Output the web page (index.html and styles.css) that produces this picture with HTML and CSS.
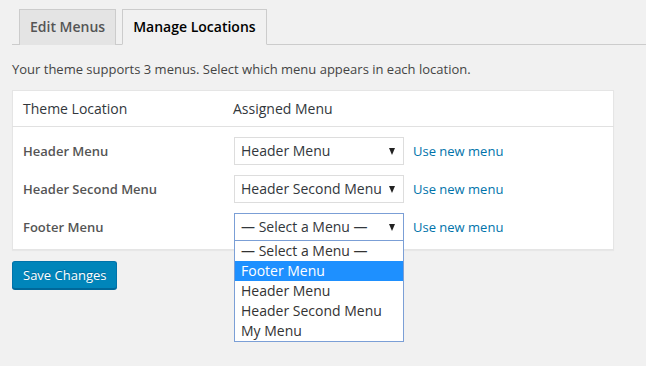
FILE: index.html
```html
<!DOCTYPE html>
<html>
<head>
	<title>Menus</title>
	<link rel="stylesheet" href="styles.css">
</head>
<body>
	<div class="wrap">
		<h2 class="nav-tab-wrapper">
			<a href="#" class="nav-tab">Edit Menus</a>
			<a href="#" class="nav-tab nav-tab-active">Manage Locations</a>
		</h2>

		<p class="manage-desc">Your theme supports 3 menus. Select which menu appears in each location.</p>

		<table class="menu-locations">
			<thead>
				<tr>
					<th class="col-location">Theme Location</th>
					<th>Assigned Menu</th>
				</tr>
			</thead>
			<tbody>
				<tr>
					<td class="menu-location-title">Header Menu</td>
					<td>
						<div class="location-row">
							<div class="menu-select">Header Menu<span class="arrow"></span></div>
							<a href="#" class="new-menu">Use new menu</a>
						</div>
					</td>
				</tr>
				<tr>
					<td class="menu-location-title">Header Second Menu</td>
					<td>
						<div class="location-row">
							<div class="menu-select">Header Second Menu<span class="arrow"></span></div>
							<a href="#" class="new-menu">Use new menu</a>
						</div>
					</td>
				</tr>
				<tr>
					<td class="menu-location-title">Footer Menu</td>
					<td>
						<div class="location-row">
							<div class="menu-select is-open">&mdash; Select a Menu &mdash;<span class="arrow"></span>
								<ul class="menu-options">
									<li>&mdash; Select a Menu &mdash;</li>
									<li class="selected">Footer Menu</li>
									<li>Header Menu</li>
									<li>Header Second Menu</li>
									<li>My Menu</li>
								</ul>
							</div>
							<a href="#" class="new-menu">Use new menu</a>
						</div>
					</td>
				</tr>
			</tbody>
		</table>

		<div class="submit-row">
			<button class="button-primary">Save Changes</button>
		</div>
	</div>
</body>
</html>
```

FILE: styles.css
```css
html{
	background-color: #f1f1f1;
}
body{
	margin: 0;
	min-height: 366px;
	background-color: #f1f1f1;
	font-family: "Open Sans", "Liberation Sans", sans-serif;
	font-size: 13px;
	color: #444;
}
.wrap{
	padding-left: 12px;
}
.nav-tab-wrapper{
	margin: 0;
	padding-top: 9px;
	padding-left: 7px;
	border-bottom: 1px solid #ccc;
	display: flex;
	gap: 6px;
	font-size: 14px;
	font-weight: 600;
	line-height: 24px;
}
.nav-tab{
	display: block;
	padding: 5px 10px;
	margin-bottom: -1px;
	border: 1px solid #ccc;
	border-bottom: none;
	background-color: #e4e4e4;
	color: #555;
	text-decoration: none;
}
.nav-tab-active{
	background-color: #f1f1f1;
	color: #000;
	border-bottom: 1px solid #f1f1f1;
}
.manage-desc{
	margin: 15px 0 12px;
	line-height: 18px;
}
.menu-locations{
	width: 602px;
	border-collapse: collapse;
	background-color: #fff;
	border: 1px solid #e5e5e5;
	box-shadow: 0 1px 1px rgba(0,0,0,.04);
}
.menu-locations th{
	text-align: left;
	font-weight: 400;
	font-size: 14px;
	line-height: 19px;
	color: #32373c;
	padding: 8px 10px;
	border-bottom: 1px solid #e1e1e1;
}
.menu-locations .col-location{
	width: 190px;
}
.menu-locations td{
	padding: 5px 10px;
	vertical-align: middle;
}
.menu-locations tbody tr:first-child td{
	padding-top: 10px;
}
.menu-locations tbody tr:last-child td{
	padding-bottom: 8px;
}
.menu-location-title{
	font-weight: 600;
	color: #555;
}
.location-row{
	display: flex;
	align-items: center;
	gap: 9px;
	padding-left: 1px;
}
.menu-select{
	position: relative;
	box-sizing: border-box;
	width: 170px;
	height: 28px;
	padding: 0 6px;
	border: 1px solid #ddd;
	background-color: #fff;
	color: #32373c;
	font-size: 14px;
	line-height: 26px;
	white-space: nowrap;
}
.menu-select.is-open{
	border-color: #7b9fd6;
}
.arrow{
	position: absolute;
	right: 8px;
	top: 10px;
	width: 0;
	height: 0;
	border-left: 3.5px solid transparent;
	border-right: 3.5px solid transparent;
	border-top: 7px solid #222;
}
.new-menu{
	color: #0073aa;
	text-decoration: none;
}
.menu-options{
	position: absolute;
	left: -1px;
	top: 100%;
	width: 170px;
	box-sizing: border-box;
	margin: 0;
	padding: 0;
	list-style: none;
	background-color: #fff;
	border: 1px solid #7b9fd6;
	z-index: 2;
}
.menu-options li{
	height: 20px;
	line-height: 20px;
	padding: 0 6px;
	color: #333;
}
.menu-options .selected{
	background-color: #1e90ff;
	color: #fff;
}
.submit-row{
	margin-top: 11px;
}
.button-primary{
	height: 28px;
	padding: 0 10px 1px;
	border: 1px solid #0073aa;
	border-bottom-color: #006799;
	border-radius: 3px;
	background-color: #0085ba;
	box-shadow: 0 1px 0 #006799;
	color: #fff;
	font-family: "Open Sans", "Liberation Sans", sans-serif;
	font-size: 13px;
	line-height: 26px;
	text-shadow: 0 -1px 1px #006799;
}
```
